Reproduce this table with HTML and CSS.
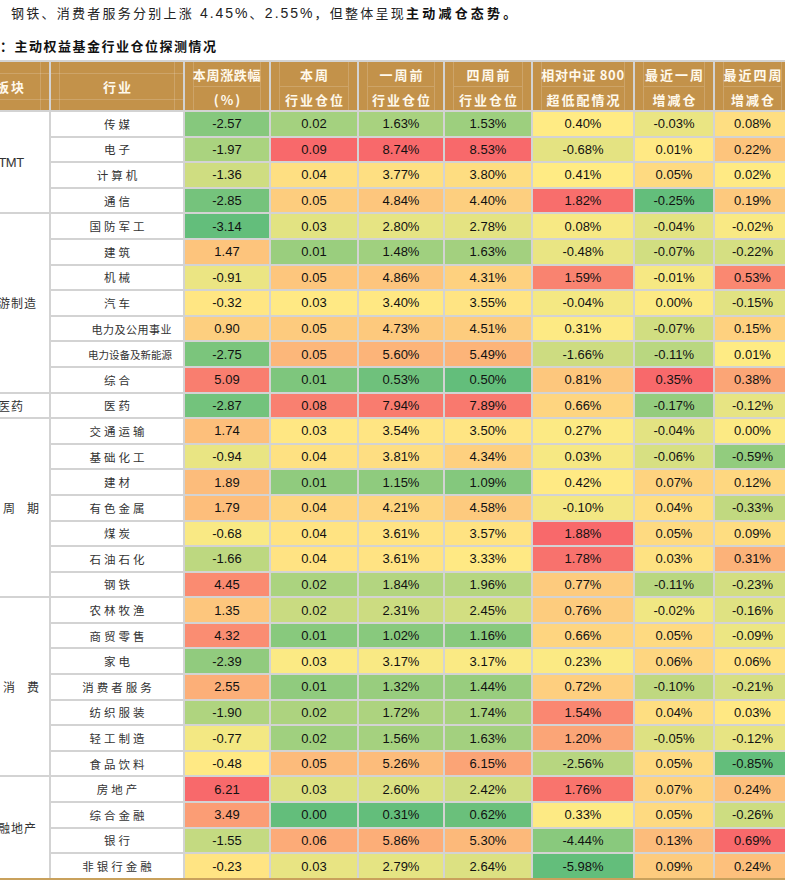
FILE: index.html
```html
<!DOCTYPE html>
<html lang="zh-CN">
<head>
<meta charset="utf-8">
<title>主动权益基金行业仓位探测情况</title>
<link rel="stylesheet" href="styles.css">
</head>
<body>
<p class="intro">钢铁、消费者服务分别上涨 <span class="n">4.45%</span>、<span class="n">2.55%</span>，但整体呈现<b>主动减仓态势。</b></p>
<p class="caption">：主动权益基金行业仓位探测情况</p>
<div class="frame">
  <table class="grid">
    <colgroup>
      <col class="c-sector"><col class="c-ind"><col class="c-chg"><col class="c-now"><col class="c-w1"><col class="c-w4"><col class="c-rel"><col class="c-d1"><col class="c-d4">
    </colgroup>
    <thead>
      <tr>
        <th class="single"><span class="hs">板块</span></th>
        <th class="single"><span class="hs">行业</span></th>
        <th><div class="h1 tight">本周涨跌幅</div><div class="h2">(%)</div></th>
        <th><div class="h1">本周</div><div class="h2">行业仓位</div></th>
        <th><div class="h1">一周前</div><div class="h2">行业仓位</div></th>
        <th><div class="h1">四周前</div><div class="h2">行业仓位</div></th>
        <th><div class="h1 tight">相对中证 800</div><div class="h2">超低配情况</div></th>
        <th><div class="h1">最近一周</div><div class="h2">增减仓</div></th>
        <th><div class="h1">最近四周</div><div class="h2">增减仓</div></th>
      </tr>
    </thead>
    <tbody id="rows"></tbody>
  </table>
</div>
<script src="script.js"></script>
</body>
</html>
```
FILE: styles.css
```css
html, body {
  margin: 0;
  padding: 0;
  background: #ffffff;
}
body {
  width: 785px;
  overflow: hidden;
  font-family: "Liberation Sans", "Noto Sans CJK SC", sans-serif;
  color: #1a1a1a;
}
.intro {
  margin: 0;
  height: 26px;
  line-height: 26px;
  padding-left: 11px;
  font-size: 13px;
  letter-spacing: 2.25px;
  white-space: nowrap;
  color: #222;
}
.intro .n {
  font-size: 14px;
  letter-spacing: 2px;
}
.intro b {
  font-weight: 700;
  letter-spacing: 3.2px;
  color: #111;
}
.caption {
  margin: 8px 0 0;
  height: 26px;
  line-height: 26px;
  font-size: 13px;
  font-weight: 700;
  letter-spacing: 1.5px;
  white-space: nowrap;
  color: #111;
}
.frame {
  width: 785px;
  overflow: hidden;
}
.grid {
  border-collapse: collapse;
  table-layout: fixed;
  width: 821px;
  margin-left: -31px;
}
.c-sector { width: 80px; }
.c-ind { width: 134px; }
.c-chg { width: 86px; }
.c-now { width: 88px; }
.c-w1 { width: 86px; }
.c-w4 { width: 88px; }
.c-rel { width: 102px; }
.c-d1 { width: 80px; }
.c-d4 { width: 77px; }

.grid thead tr { height: 50px; }
.grid th {
  padding: 0;
  border: 2px solid #d3d3d3;
  background-color: #c3924a;
  background-image: linear-gradient(to right,
    transparent 8px, rgba(255,255,255,0.17) 8px, rgba(255,255,255,0.17) 9px, transparent 9px,
    transparent calc(100% - 9px), rgba(255,255,255,0.17) calc(100% - 9px), rgba(255,255,255,0.17) calc(100% - 8px), transparent calc(100% - 8px));
  color: #fff9ec;
  font-family: "Noto Sans CJK SC", sans-serif;
  font-size: 13px;
  font-weight: 700;
  letter-spacing: 2px;
  text-align: center;
  vertical-align: middle;
  white-space: nowrap;
}
.grid th.single {
  background-image:
    linear-gradient(to bottom, transparent 11px, rgba(255,255,255,0.17) 11px, rgba(255,255,255,0.17) 12px, transparent 12px,
      transparent 37px, rgba(255,255,255,0.17) 37px, rgba(255,255,255,0.17) 38px, transparent 38px),
    linear-gradient(to right,
    transparent 8px, rgba(255,255,255,0.17) 8px, rgba(255,255,255,0.17) 9px, transparent 9px,
    transparent calc(100% - 9px), rgba(255,255,255,0.17) calc(100% - 9px), rgba(255,255,255,0.17) calc(100% - 8px), transparent calc(100% - 8px));
}
.hs { padding-left: 2px; }
.h1 {
  height: 24px;
  line-height: 26px;
  padding-left: 2px;
}
.h2 {
  height: 23px;
  line-height: 26px;
  margin: 0 9px;
  padding-left: 2px;
  border-top: 1px solid rgba(255,255,255,0.17);
}
.h1.tight {
  letter-spacing: 0.7px;
  padding-left: 0;
}

.grid tbody tr { height: 25.6px; }
.grid td {
  padding: 0;
  border: 2px solid #d3d3d3;
  text-align: center;
  vertical-align: middle;
  white-space: nowrap;
  font-size: 13px;
  color: #111;
}
.grid td.num {
  font-family: "Liberation Sans", Arial, sans-serif;
}
.grid td.sector {
  background: #ffffff;
  color: #333;
  font-family: "Liberation Sans", "Noto Sans CJK SC", sans-serif;
  font-size: 12px;
  letter-spacing: 1px;
  padding-left: 2px;
}
.grid td.sector.latin {
  font-size: 13px;
  letter-spacing: -0.5px;
}
.grid td.sector.wide {
  letter-spacing: 12px;
  padding-left: 32px;
}
.grid td.ind {
  background: #ffffff;
  color: #333;
  font-family: "Noto Sans CJK SC", sans-serif;
  font-size: 11.5px;
  letter-spacing: 3px;
  padding-left: 3px;
}
.grid td.ind.len7 {
  font-size: 11px;
  letter-spacing: 0.5px;
  text-align: right;
  padding: 0 11px 0 0;
}
.grid td.ind.len8 {
  font-size: 10.5px;
  letter-spacing: 0;
  text-align: right;
  padding: 0 11px 0 0;
}
.grid td.bottom {
  border-bottom: 2px solid #c9a15c;
}
```
FILE: script.js
```js
(function () {
  var groups = [
    { label: "TMT", kind: "latin", rows: [
      "传媒|-2.57|0.02|1.63%|1.53%|0.40%|-0.03%|0.08%",
      "电子|-1.97|0.09|8.74%|8.53%|-0.68%|0.01%|0.22%",
      "计算机|-1.36|0.04|3.77%|3.80%|0.41%|0.05%|0.02%",
      "通信|-2.85|0.05|4.84%|4.40%|1.82%|-0.25%|0.19%"
    ]},
    { label: "中游制造", rows: [
      "国防军工|-3.14|0.03|2.80%|2.78%|0.08%|-0.04%|-0.02%",
      "建筑|1.47|0.01|1.48%|1.63%|-0.48%|-0.07%|-0.22%",
      "机械|-0.91|0.05|4.86%|4.31%|1.59%|-0.01%|0.53%",
      "汽车|-0.32|0.03|3.40%|3.55%|-0.04%|0.00%|-0.15%",
      "电力及公用事业|0.90|0.05|4.73%|4.51%|0.31%|-0.07%|0.15%",
      "电力设备及新能源|-2.75|0.05|5.60%|5.49%|-1.66%|-0.11%|0.01%",
      "综合|5.09|0.01|0.53%|0.50%|0.81%|0.35%|0.38%"
    ]},
    { label: "医药", rows: [
      "医药|-2.87|0.08|7.94%|7.89%|0.66%|-0.17%|-0.12%"
    ]},
    { label: "周期", kind: "wide", rows: [
      "交通运输|1.74|0.03|3.54%|3.50%|0.27%|-0.04%|0.00%",
      "基础化工|-0.94|0.04|3.81%|4.34%|0.03%|-0.06%|-0.59%",
      "建材|1.89|0.01|1.15%|1.09%|0.42%|0.07%|0.12%",
      "有色金属|1.79|0.04|4.21%|4.58%|-0.10%|0.04%|-0.33%",
      "煤炭|-0.68|0.04|3.61%|3.57%|1.88%|0.05%|0.09%",
      "石油石化|-1.66|0.04|3.61%|3.33%|1.78%|0.03%|0.31%",
      "钢铁|4.45|0.02|1.84%|1.96%|0.77%|-0.11%|-0.23%"
    ]},
    { label: "消费", kind: "wide", rows: [
      "农林牧渔|1.35|0.02|2.31%|2.45%|0.76%|-0.02%|-0.16%",
      "商贸零售|4.32|0.01|1.02%|1.16%|0.66%|0.05%|-0.09%",
      "家电|-2.39|0.03|3.17%|3.17%|0.23%|0.06%|0.06%",
      "消费者服务|2.55|0.01|1.32%|1.44%|0.72%|-0.10%|-0.21%",
      "纺织服装|-1.90|0.02|1.72%|1.74%|1.54%|0.04%|0.03%",
      "轻工制造|-0.77|0.02|1.56%|1.63%|1.20%|-0.05%|-0.12%",
      "食品饮料|-0.48|0.05|5.26%|6.15%|-2.56%|0.05%|-0.85%"
    ]},
    { label: "金融地产", rows: [
      "房地产|6.21|0.03|2.60%|2.42%|1.76%|0.07%|0.24%",
      "综合金融|3.49|0.00|0.31%|0.62%|0.33%|0.05%|-0.26%",
      "银行|-1.55|0.06|5.86%|5.30%|-4.44%|0.13%|0.69%",
      "非银行金融|-0.23|0.03|2.79%|2.64%|-5.98%|0.09%|0.24%"
    ]}
  ];

  var LOW = [99, 190, 123], MID = [255, 235, 132], HIGH = [248, 105, 107];

  var all = [];
  groups.forEach(function (g) {
    g.parsed = g.rows.map(function (s) {
      var p = s.split("|");
      var v = p.slice(1).map(parseFloat);
      // "本周行业仓位" is shown rounded; its value is 一周前 + 最近一周
      var r = { name: p[0], text: p.slice(1), vals: [v[0], v[2] + v[5], v[2], v[3], v[4], v[5], v[6]] };
      all.push(r);
      return r;
    });
  });

  function percentile(sorted, p) {
    var rank = p * (sorted.length - 1);
    var i = Math.floor(rank), f = rank - i;
    if (i + 1 >= sorted.length) return sorted[i];
    return sorted[i] + (sorted[i + 1] - sorted[i]) * f;
  }

  var stats = [];
  for (var c = 0; c < 7; c++) {
    var col = all.map(function (r) { return r.vals[c]; }).sort(function (a, b) { return a - b; });
    stats.push({ min: col[0], mid: percentile(col, 0.5), max: col[col.length - 1] });
  }

  function colour(v, s) {
    var a, b, t;
    if (v <= s.mid) {
      a = LOW; b = MID; t = s.mid === s.min ? 1 : (v - s.min) / (s.mid - s.min);
    } else {
      a = MID; b = HIGH; t = s.max === s.mid ? 1 : (v - s.mid) / (s.max - s.mid);
    }
    t = Math.max(0, Math.min(1, t));
    return "rgb(" + a.map(function (x, i) { return Math.round(x + (b[i] - x) * t); }).join(",") + ")";
  }

  var tbody = document.getElementById("rows");
  groups.forEach(function (g, gi) {
    var lastGroup = gi === groups.length - 1;
    g.parsed.forEach(function (r, ri) {
      var tr = document.createElement("tr");
      var isBottom = lastGroup && ri === g.parsed.length - 1;
      if (ri === 0) {
        var sc = document.createElement("td");
        sc.className = "sector" + (g.kind ? " " + g.kind : "") + (lastGroup ? " bottom" : "");
        sc.rowSpan = g.parsed.length;
        sc.textContent = g.label;
        tr.appendChild(sc);
      }
      var nm = document.createElement("td");
      var len = r.name.length;
      nm.className = "ind" + (len >= 8 ? " len8" : len === 7 ? " len7" : "") + (isBottom ? " bottom" : "");
      nm.textContent = r.name;
      tr.appendChild(nm);
      for (var c = 0; c < 7; c++) {
        var td = document.createElement("td");
        td.className = "num" + (isBottom ? " bottom" : "");
        td.textContent = r.text[c];
        td.style.backgroundColor = colour(r.vals[c], stats[c]);
        tr.appendChild(td);
      }
      tbody.appendChild(tr);
    });
  });
})();
```
